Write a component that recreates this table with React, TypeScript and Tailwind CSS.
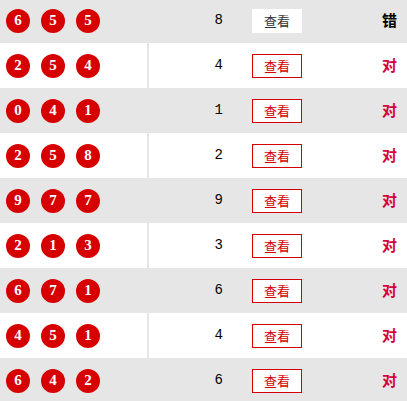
const rows: { balls: number[]; sum: number; result: string }[] = [
  { balls: [6, 5, 5], sum: 8, result: '错' },
  { balls: [2, 5, 4], sum: 4, result: '对' },
  { balls: [0, 4, 1], sum: 1, result: '对' },
  { balls: [2, 5, 8], sum: 2, result: '对' },
  { balls: [9, 7, 7], sum: 9, result: '对' },
  { balls: [2, 1, 3], sum: 3, result: '对' },
  { balls: [6, 7, 1], sum: 6, result: '对' },
  { balls: [4, 5, 1], sum: 4, result: '对' },
  { balls: [6, 4, 2], sum: 6, result: '对' },
];

export default function App() {
  return (
    <div className="h-[401px] w-[407px] overflow-hidden bg-white font-['Noto_Sans_CJK_SC',sans-serif]">
      <div className="-mt-[2px]">
        {rows.map((r, i) => {
          const gray = i % 2 === 0;
          const wrong = r.result === '错';
          return (
            <div
              key={i}
              className={`flex h-[45px] items-center ${gray ? 'bg-[#e6e6e6]' : 'bg-white'}`}
            >
              <div className="flex h-full w-[147px] items-center gap-[11px] pl-[6px]">
                {r.balls.map((b, j) => (
                  <span
                    key={j}
                    className="flex h-[24px] w-[24px] items-center justify-center rounded-full bg-[#d70000] font-['Liberation_Serif',serif] text-[15px] font-bold leading-none text-white"
                  >
                    {b}
                  </span>
                ))}
              </div>
              <div className="h-full w-[2px] bg-[#e6e6e6]" />
              <div className="flex w-[103px] justify-end pr-[29px] font-['Liberation_Mono',monospace] text-[14px] text-black">
                {r.sum}
              </div>
              {wrong ? (
                <span className="flex h-[24px] w-[50px] items-center justify-center bg-white text-[13px] text-[#333]">
                  查看
                </span>
              ) : (
                <span className="flex h-[24px] w-[50px] items-center justify-center border border-[#d40000] bg-white text-[13px] text-[#d40000]">
                  查看
                </span>
              )}
              <div
                className={`flex flex-1 justify-end pr-[10px] text-[15px] font-bold ${wrong ? 'text-black' : 'text-[#d4003c]'}`}
              >
                {r.result}
              </div>
            </div>
          );
        })}
      </div>
    </div>
  );
}
